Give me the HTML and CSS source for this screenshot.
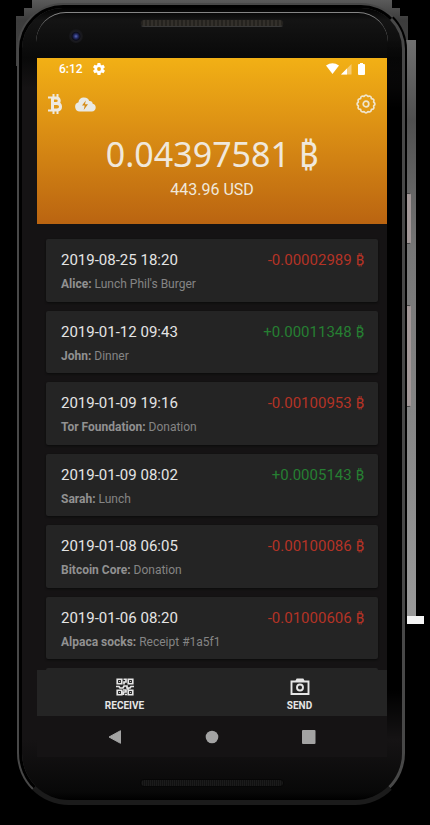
FILE: index.html
```html
<!DOCTYPE html>
<html lang="en">
<head>
<meta charset="utf-8">
<meta name="viewport" content="width=device-width, initial-scale=1">
<title>Bitcoin wallet</title>
<link rel="stylesheet" href="styles.css">
</head>
<body>
<div class="stage">
  <div class="halo"></div>
  <div class="shadow-strip"></div>
  <div class="shadow-foot"></div>
  <div class="side-key power"></div>
  <div class="side-key volume"></div>
  <div class="device">
    <div class="glass-edge"></div>
    <div class="camera"></div>
    <div class="speaker"></div>
    <div class="speaker lower"></div>
    <main class="screen">
      <header class="hero">
        <div class="status">
          <span>6:12</span>
          <svg class="status-gear" width="12" height="12" viewBox="2 2 20 20"><path fill="#fff" d="M19.4 13a7.8 7.8 0 0 0 0-2l2.1-1.6a.5.5 0 0 0 .1-.6l-2-3.5a.5.5 0 0 0-.6-.2l-2.5 1a7.300 7.300 0 0 0-1.700-1l-.4-2.600a.5.5 0 0 0-.5-.5h-4a.5.5 0 0 0-.5.5L9.100 5.100a7.300 7.300 0 0 0-1.700 1l-2.500-1a.5.5 0 0 0-.6.2l-2 3.500a.5.5 0 0 0 .1.6L4.600 11a7.800 7.800 0 0 0 0 2l-2.200 1.600a.5.5 0 0 0-.1.6l2 3.500c.1.2.4.3.6.2l2.500-1a7.300 7.300 0 0 0 1.700 1l.4 2.600c0 .3.2.5.5.5h4c.3 0 .5-.2.5-.5l.4-2.600a7.300 7.300 0 0 0 1.700-1l2.500 1c.2.100.5 0 .6-.2l2-3.500a.5.5 0 0 0-.1-.6zM12 15.200a3.200 3.200 0 1 1 0-6.400 3.200 3.200 0 0 1 0 6.400z"/></svg>
          <svg class="status-signals" width="40" height="12" viewBox="0 0 40 12"><path fill="#fff" d="M0 2.500Q6.500-2 13 2.500L6.500 11Z"/><path fill="#f7cb70" d="M15 11.500 25.500 1V11.500Z"/><path fill="#fff" d="M15 11.500 21 5.500V11.500Z"/><path fill="#fff" d="M34 0h3v1h1q1 0 1 1v9q0 1-1 1h-5q-1 0-1-1V2q0-1 1-1h1z"/></svg>
        </div>
        <div class="toolbar">
          <button type="button" aria-label="Bitcoin"><svg width="15" height="20" viewBox="0 0 15 20"><path fill="none" stroke="#eee9df" stroke-width="3" d="M4.500 3.500V16.500M4 4h4c4.300 0 4.300 5.500 0 5.500H5h4c4.700 0 4.700 6.500 0 6.500H4"/><path stroke="#eee9df" stroke-width="2" d="M0 3.500h4M0 16.500h4M5.500 0v4M9.500 0v4M5.500 16v4M9.500 16v4"/></svg></button>
          <button type="button" aria-label="Lightning cloud"><svg width="21" height="15" viewBox="0 0 21 15"><path fill="#e9e9e4" d="M5 14.500a4.700 4.700 0 0 1-1.500-9.200A5 5 0 0 1 9 .5c3 0 4.600 1.500 5.200 3.500 2-.3 3.500 1 3.500 2.800 4.300.7 4 7.700-1 7.700z"/><path fill="#d58b16" d="M10.800 3.500 7 8.500h2.700l-1 4.500 4.300-5.700h-3z"/></svg></button>
          <button type="button" class="settings" aria-label="Settings"><svg width="20" height="20" viewBox="0 0 20 20" fill="none" stroke="#f0e5cc" stroke-width="1.700"><path stroke-linejoin="round" d="M8 2.400Q10-.2 12 2.400Q15.200 1.200 15.400 4.600Q18.800 4.800 17.600 8Q20.200 10 17.600 12Q18.800 15.200 15.400 15.400Q15.200 18.800 12 17.600Q10 20.200 8 17.600Q4.800 18.800 4.600 15.400Q1.200 15.200 2.400 12Q-.2 10 2.400 8Q1.200 4.800 4.600 4.600Q4.800 1.200 8 2.400Z"/><circle cx="10" cy="10" r="2.800"/></svg></button>
        </div>
        <div class="balance">0.04397581 ₿</div>
        <div class="fiat">443.96 USD</div>
      </header>
      <section class="history" aria-label="Transactions">
        <article class="tx"><div class="line"><time>2019-08-25 18:20</time><span class="out">-0.00002989 ₿</span></div><p><b>Alice:</b> Lunch Phil's Burger</p></article>
        <article class="tx"><div class="line"><time>2019-01-12 09:43</time><span class="in">+0.00011348 ₿</span></div><p><b>John:</b> Dinner</p></article>
        <article class="tx"><div class="line"><time>2019-01-09 19:16</time><span class="out">-0.00100953 ₿</span></div><p><b>Tor Foundation:</b> Donation</p></article>
        <article class="tx"><div class="line"><time>2019-01-09 08:02</time><span class="in">+0.0005143 ₿</span></div><p><b>Sarah:</b> Lunch</p></article>
        <article class="tx"><div class="line"><time>2019-01-08 06:05</time><span class="out">-0.00100086 ₿</span></div><p><b>Bitcoin Core:</b> Donation</p></article>
        <article class="tx"><div class="line"><time>2019-01-06 08:20</time><span class="out">-0.01000606 ₿</span></div><p><b>Alpaca socks:</b> Receipt #1a5f1</p></article>
        <div class="next"></div>
      </section>
      <nav class="actions">
        <button type="button"><svg width="18" height="18" viewBox="0 0 18 18"><path fill="none" stroke="#e6e6e6" stroke-width="1.700" d="M1.250 1.250h4.500v4.500h-4.500zM12.250 1.250h4.500v4.500h-4.500zM1.250 12.250h4.500v4.500h-4.500zM12.250 12.250h4.500v4.500h-4.500zM7.500 1.250H10V4H8v2.500M0 8.500h3l1 1.500h3l1-2h3v2h3l1-1.500h3M7.500 17v-3H10v-2H7M9 16.500h2M12 10v2"/><path fill="#c8c8c8" d="M3 3h1v1H3zM14 3h1v1h-1zM3 14h1v1H3zM14 14h1v1h-1z"/></svg><span>RECEIVE</span></button>
        <button type="button"><svg width="20" height="18" viewBox="0 0 20 18" fill="none" stroke="#e6e6e6" stroke-width="1.900"><path d="M1.500 3.500h17v12.500h-17zM6 3.500 7.200 1.500h5.600L14 3.500"/><circle cx="10" cy="9.500" r="3"/></svg><span>SEND</span></button>
      </nav>
      <nav class="system">
        <button type="button" aria-label="Back"><svg width="14" height="14" viewBox="0 0 14 14"><path fill="#a3a3a3" stroke="#a3a3a3" stroke-linejoin="round" d="M1 7 12.500.7v12.600z"/></svg></button>
        <button type="button" aria-label="Home"><svg width="14" height="14" viewBox="0 0 14 14"><circle cx="7" cy="7" r="6.300" fill="#a3a3a3"/></svg></button>
        <button type="button" aria-label="Recent apps"><svg width="14" height="14" viewBox="0 0 14 14"><rect width="13.500" height="14" rx="1" fill="#a3a3a3"/></svg></button>
      </nav>
    </main>
  </div>
</div>
</body>
</html>
```
FILE: styles.css
```css
* { box-sizing: border-box; }
body {
  margin: 0;
  background: #000;
  font-family: Roboto, "Noto Sans", sans-serif;
}
button {
  padding: 0;
  border: 0;
  background: none;
  color: inherit;
  font: inherit;
}
svg { display: block; }
.stage {
  position: relative;
  min-height: 100vh;
  padding: 3px 23px 20px 17px;
  display: flex;
}
.halo {
  position: absolute;
  top: 0;
  left: 16px;
  right: 22px;
  height: 66px;
  background: linear-gradient(#5a5a5a, #3c3c3c 20px, #444);
  clip-path: polygon(16px 0, calc(100% - 16px) 0, calc(100% - 16px) 8px, calc(100% - 8px) 8px, calc(100% - 8px) 16px, 100% 16px, 100% 66px, 0 66px, 0 16px, 8px 16px, 8px 8px, 16px 8px);
}
.shadow-strip {
  position: absolute;
  top: 40px;
  right: 14px;
  width: 10px;
  height: 576px;
  background: linear-gradient(#707070, #505050 80px, #777 210px, #888 400px, #999);
}
.shadow-foot {
  position: absolute;
  top: 616px;
  right: 6px;
  width: 17px;
  height: 8px;
  background: #f5f5f5;
}
.side-key {
  position: absolute;
  right: 19px;
  width: 4px;
  border: 1px solid #444;
  border-left: 0;
  border-right-color: #a29797;
  border-radius: 0 2px 2px 0;
  background: #a29797;
}
.power { top: 193px; height: 51px; }
.volume { top: 305px; height: 102px; }
.device {
  position: relative;
  flex: 1;
  min-width: 0;
  display: flex;
  padding: 50px 15px 43px;
  border: 5px ridge #484848;
  border-bottom: 5px solid #1b1b1b;
  border-radius: 46px 46px 52px 52px;
  background:
    linear-gradient(#0000, #000 70px, #000 calc(100% - 50px), #0000) right 30px / 15px calc(100% - 90px) no-repeat,
    linear-gradient(#020202, #141414 12px, #090909 50px, #151314 80px, #151314 calc(100% - 60px), #080808 calc(100% - 8px), #000);
}
.glass-edge {
  position: absolute;
  top: 4px;
  left: 14px;
  right: 14px;
  height: 30px;
  border-top: 1px solid #858585;
  border-radius: 34px 34px 0 0;
}
.camera {
  position: absolute;
  top: 21px;
  left: 47px;
  width: 14px;
  height: 14px;
  border-radius: 50%;
  background: radial-gradient(circle at 50% 52%, #5968ba 0, #252c68 2px, #0b0c19 4px, #1b1b20 5px, #151517 7px);
}
.speaker {
  position: absolute;
  top: 11px;
  left: 31%;
  right: 31%;
  height: 8px;
  border: 1px solid #161616;
  border-bottom-color: #393939;
  border-radius: 4px;
  background: repeating-linear-gradient(90deg, #25231f 0, #25231f 2px, #33302b 2px, #33302b 4px);
}
.speaker.lower {
  top: auto;
  bottom: 13px;
  border-color: #060606;
  background: repeating-linear-gradient(90deg, #111 0, #111 1px, #1b1b1b 1px, #1b1b1b 2px);
}
.screen {
  flex: 1;
  min-width: 0;
  display: flex;
  flex-direction: column;
  background: #151314;
}
.hero {
  padding-bottom: 24px;
  background: linear-gradient(#f2b015, #dc9014 42%, #ba6411);
  color: #f0e8db;
  text-align: center;
}
.status {
  display: flex;
  align-items: center;
  height: 22px;
  padding: 0 21px 0 22px;
  color: #fff;
  font-size: 12px;
  font-weight: 500;
}
.status-gear { margin-left: 10px; }
.status-signals { margin-left: auto; }
.toolbar {
  display: flex;
  align-items: center;
  gap: 12px;
  height: 48px;
  padding: 0 11px;
}
.settings { margin-left: auto; }
.balance {
  font: 34px/52px "Noto Sans", sans-serif;
}
.fiat {
  font-size: 16px;
  line-height: 20px;
}
.history {
  flex: 1;
  display: grid;
  grid-template-rows: repeat(6, 1fr) 2px;
  gap: 9px;
  padding: 15px 9px 0;
}
.tx {
  padding: 11px 14px 0 15px;
  border-radius: 2px;
  background: #242424;
  box-shadow: 0 1px 2px #0b0b0b;
}
.line {
  display: flex;
  justify-content: space-between;
  color: #e4e4e4;
  font-size: 15px;
  line-height: 20px;
}
.out { color: #b43326; }
.in { color: #267f32; }
.tx p {
  margin: 6px 0 0;
  color: #858585;
  font-size: 12px;
  line-height: 16px;
}
.tx b { color: #919191; }
.next {
  border-radius: 2px 2px 0 0;
  background: #242424;
}
.actions {
  display: grid;
  grid-template-columns: 1fr 1fr;
  height: 46px;
  background: #242424;
  color: #e6e6e6;
}
.actions button {
  display: flex;
  flex-direction: column;
  align-items: center;
  gap: 4px;
  padding-top: 8px;
  font-size: 10px;
  font-weight: 700;
  line-height: 12px;
}
.system {
  display: flex;
  align-items: center;
  justify-content: space-between;
  height: 41px;
  padding: 0 71px;
}
```
